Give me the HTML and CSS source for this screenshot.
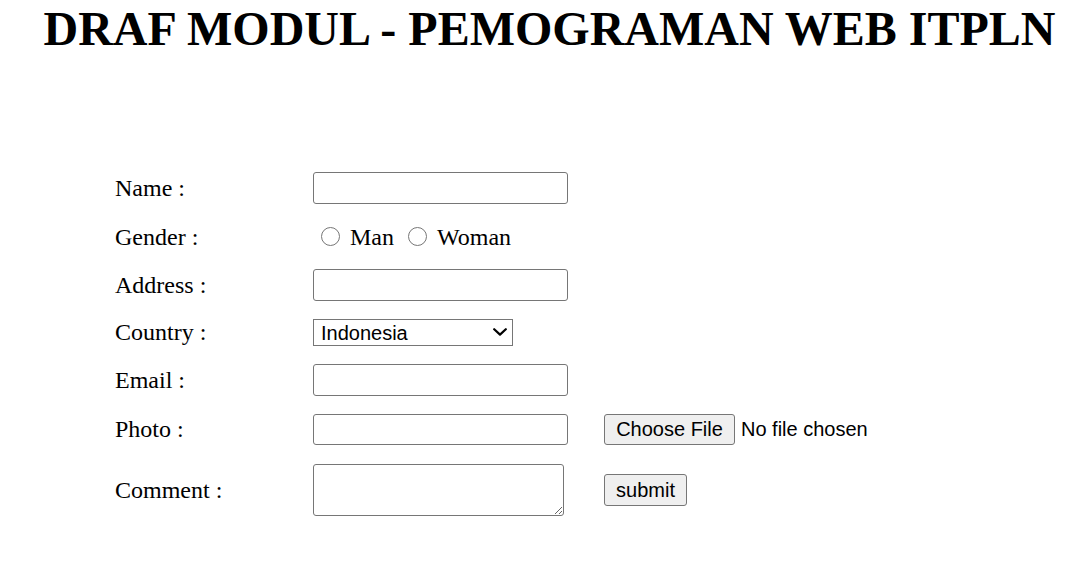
FILE: index.html
```html
<!DOCTYPE html>
<html lang="id">
<head>
<meta charset="utf-8">
<title>Draf Modul</title>
<link rel="stylesheet" href="styles.css">
</head>
<body>
<h1 class="title">DRAF MODUL - PEMOGRAMAN WEB ITPLN</h1>
<form class="form">
  <label class="lbl" for="name">Name :</label>
  <div class="field wide"><input class="text" type="text" id="name"></div>

  <span class="lbl gap2">Gender :</span>
  <div class="field wide gender gap2"><input class="radio" type="radio" name="g" id="man"> <label for="man">Man</label> <input class="radio" type="radio" name="g" id="woman"> <label for="woman">Woman</label></div>

  <label class="lbl" for="address">Address :</label>
  <div class="field wide"><input class="text" type="text" id="address"></div>

  <label class="lbl" for="country">Country :</label>
  <div class="field wide"><span class="select-wrap"><select class="select" id="country"><option>Indonesia</option><option>Malaysia</option><option>Singapore</option></select><svg class="chev" width="14" height="8" viewBox="0 0 14 8" aria-hidden="true"><path d="M1.2 1.2 L7 6.6 L12.8 1.2" fill="none" stroke="#000" stroke-width="2.2" stroke-linecap="round" stroke-linejoin="round"/></svg></span></div>

  <label class="lbl" for="email">Email :</label>
  <div class="field wide"><input class="text" type="text" id="email"></div>

  <label class="lbl" for="photo">Photo :</label>
  <div class="field"><input class="text short" type="text" id="photo"></div>
  <div class="field"><input class="file" type="file"></div>

  <label class="lbl gap1" for="comment">Comment :</label>
  <div class="field gap1"><textarea class="area" id="comment"></textarea></div>
  <div class="field gap1"><input class="btn" type="submit" value="submit"></div>
</form>
</body>
</html>
```
FILE: styles.css
```css
html, body {
  margin: 0;
  padding: 0;
  background: #fff;
}

body {
  font-family: "Liberation Serif", "Times New Roman", serif;
  font-size: 24px;
  color: #000;
}

.title {
  margin: 1px 0 116px;
  padding-left: 7px;
  font-size: 48px;
  font-weight: bold;
  text-align: center;
  line-height: normal;
}

.form {
  display: grid;
  grid-template-columns: 198px 291px auto;
  row-gap: 18px;
  align-items: center;
  margin-left: 115px;
}

.gap2 {
  margin-top: 2px;
}

.gap1 {
  margin-top: 1px;
}

.lbl {
  line-height: normal;
}

.field {
  display: flex;
  align-items: center;
}

.wide {
  grid-column: span 2;
}

.text {
  box-sizing: border-box;
  width: 255px;
  height: 32px;
  margin: 0;
  border: 1px solid #767676;
  border-radius: 3px;
  padding: 1px 3px;
  font: 20px "Liberation Sans", Arial, sans-serif;
  background: #fff;
}

.text.short {
  height: 31px;
}

.gender {
  font-size: 24px;
  line-height: normal;
}

.gender label {
  margin-left: 6px;
}

.radio {
  width: 19px;
  height: 19px;
  margin: 0 4px 0 8px;
  position: relative;
  top: -1px;
}

.radio + label + .radio {
  margin-left: 14px;
}

.select-wrap {
  position: relative;
  display: inline-flex;
}

.select {
  box-sizing: border-box;
  width: 200px;
  height: 27px;
  margin: 0;
  border: 1px solid #767676;
  border-radius: 0;
  padding: 0 24px 0 7px;
  font: 20px "Liberation Sans", Arial, sans-serif;
  color: #000;
  background: #fff;
  appearance: none;
  -webkit-appearance: none;
}

.chev {
  position: absolute;
  right: 6px;
  top: 9px;
  pointer-events: none;
}

.file {
  height: 31px;
  margin: 0;
  font: 20px "Liberation Sans", Arial, sans-serif;
  color: #000;
}

.file::file-selector-button {
  box-sizing: border-box;
  width: 131px;
  height: 31px;
  margin: 0 6px 0 0;
  padding: 0 9px;
  border: 1px solid #767676;
  border-radius: 3px;
  background: #efefef;
  font: 20px "Liberation Sans", Arial, sans-serif;
  color: #000;
}

.area {
  box-sizing: border-box;
  width: 251px;
  height: 52px;
  margin: 0;
  border: 1px solid #767676;
  border-radius: 3px;
  padding: 3px;
  font: 20px "Liberation Mono", monospace;
  background: #fff;
}

.btn {
  box-sizing: border-box;
  width: 83px;
  height: 32px;
  margin: 0;
  padding: 0 9px;
  border: 1px solid #767676;
  border-radius: 3px;
  background: #efefef;
  font: 20px "Liberation Sans", Arial, sans-serif;
  color: #000;
}
```
